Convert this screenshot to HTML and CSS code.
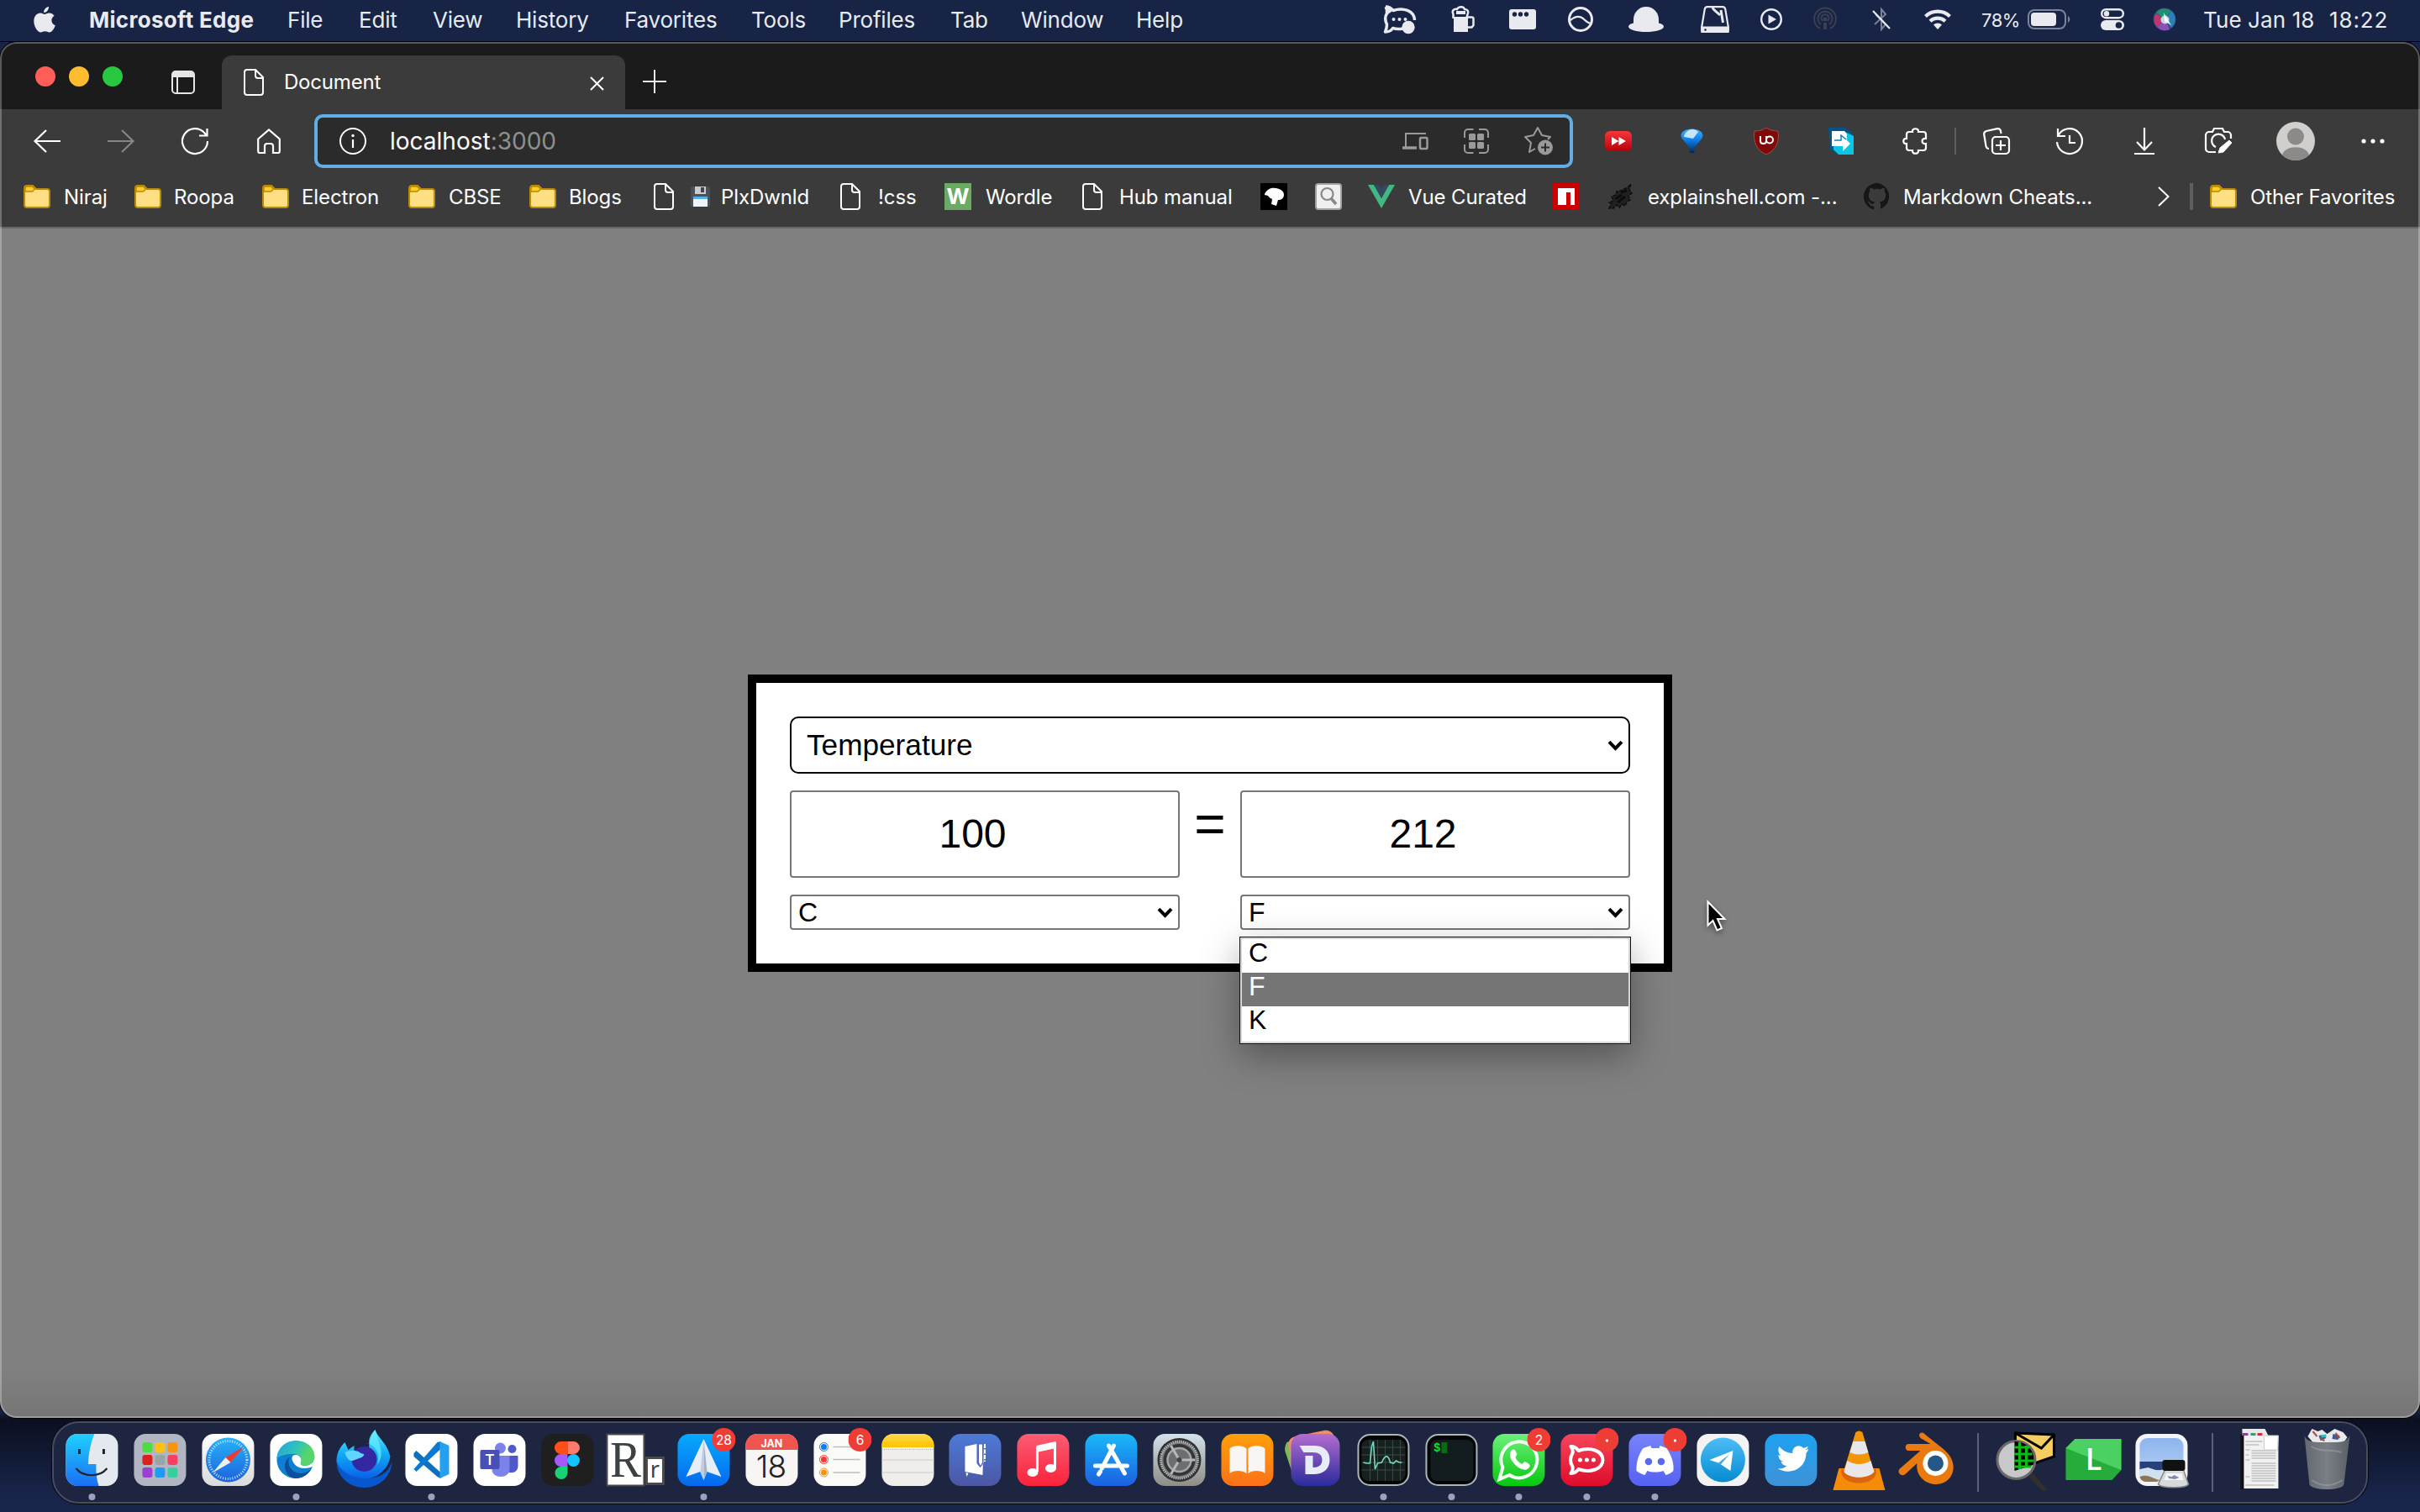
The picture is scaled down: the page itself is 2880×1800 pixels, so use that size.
FILE: index.html
```html
<!DOCTYPE html>
<html lang="en">
<head>
<meta charset="utf-8">
<title>Document</title>
<link rel="stylesheet" href="styles.css">
</head>
<body>
<svg class="defs" width="0" height="0">
  <defs>
    <symbol id="folder" viewBox="0 0 32 28"><path d="M1 4a3 3 0 0 1 3-3h7l4 4h13a3 3 0 0 1 3 3v16a3 3 0 0 1-3 3H4a3 3 0 0 1-3-3z" fill="#ffdf83" stroke="#b98a06" stroke-width="2"/><path d="M2 8V4a2 2 0 0 1 2-2h6.500l3 3-3 3z" fill="#ffcb30" stroke="#b98a06" stroke-width="1.500"/></symbol>
    <symbol id="page" viewBox="0 0 24 32"><path d="M4 1h10l9 9v18a3 3 0 0 1-3 3H4a3 3 0 0 1-3-3V4a3 3 0 0 1 3-3zM14 1v7a3 3 0 0 0 3 3h6" fill="none" stroke="#fff" stroke-width="2"/></symbol>
    <linearGradient id="gFinder" x2="0" y2="1"><stop stop-color="#1fd0fd"/><stop offset="1" stop-color="#1c6ff3"/></linearGradient>
    <linearGradient id="gWhite" x2="0" y2="1"><stop stop-color="#fff"/><stop offset="1" stop-color="#dadada"/></linearGradient>
    <linearGradient id="gSafari" x2="0" y2="1"><stop stop-color="#26b2f8"/><stop offset="1" stop-color="#1d62dd"/></linearGradient>
    <linearGradient id="gSpark" x2="0" y2="1"><stop stop-color="#05aafd"/><stop offset="1" stop-color="#0569ef"/></linearGradient>
    <linearGradient id="gEdge" x2="1" y2=".4"><stop stop-color="#2a9fe0"/><stop offset=".5" stop-color="#2cc1c0"/><stop offset="1" stop-color="#62da55"/></linearGradient>
    <linearGradient id="gFox" x2="0" y2="1"><stop stop-color="#5ff0ff"/><stop offset=".5" stop-color="#10a9f5"/><stop offset="1" stop-color="#0a5ee6"/></linearGradient>
    <linearGradient id="gNotes" x2="0" y2="1"><stop stop-color="#ffd84a"/><stop offset="1" stop-color="#ffc400"/></linearGradient>
    <linearGradient id="gBlue" x2="0" y2="1"><stop stop-color="#4d7bd8"/><stop offset="1" stop-color="#4b57a3"/></linearGradient>
    <linearGradient id="gMusic" x2="0" y2="1"><stop stop-color="#fb5c74"/><stop offset="1" stop-color="#fa233b"/></linearGradient>
    <linearGradient id="gStore" x2="0" y2="1"><stop stop-color="#19b9f8"/><stop offset="1" stop-color="#1c5fe0"/></linearGradient>
    <linearGradient id="gPrefs" x2="0" y2="1"><stop stop-color="#d3e2ea"/><stop offset="1" stop-color="#8f8c88"/></linearGradient>
    <linearGradient id="gBooks" x2="0" y2="1"><stop stop-color="#ff9f0a"/><stop offset="1" stop-color="#fb7118"/></linearGradient>
    <linearGradient id="gDash" x2="0" y2="1"><stop stop-color="#b36dd0"/><stop offset="1" stop-color="#2a2b9c"/></linearGradient>
    <linearGradient id="gWhats" x2="0" y2="1"><stop stop-color="#6cf07a"/><stop offset="1" stop-color="#06c80f"/></linearGradient>
    <linearGradient id="gRocket" x2="0" y2="1"><stop stop-color="#f8455c"/><stop offset="1" stop-color="#dc0d2b"/></linearGradient>
    <linearGradient id="gDiscord" x2="0" y2="1"><stop stop-color="#7683fb"/><stop offset="1" stop-color="#5662f3"/></linearGradient>
    <linearGradient id="gTele" x2="0" y2="1"><stop stop-color="#4cbdf6"/><stop offset="1" stop-color="#078bd0"/></linearGradient>
    <linearGradient id="gTwit" x2="0" y2="1"><stop stop-color="#1da1f2"/><stop offset="1" stop-color="#3e92d6"/></linearGradient>
    <linearGradient id="gTrash"><stop stop-color="#666c70"/><stop offset=".5" stop-color="#7d8388"/><stop offset="1" stop-color="#5c6266"/></linearGradient>
    <linearGradient id="gSky" x2="0" y2="1"><stop stop-color="#8db4ee"/><stop offset="1" stop-color="#b9d4f4"/></linearGradient>
    <linearGradient id="gFast" x2="0" y2="1"><stop stop-color="#f8363c"/><stop offset="1" stop-color="#b80008"/></linearGradient>
    <linearGradient id="gBalloon" x2="0" y2="1"><stop stop-color="#3fb0ff"/><stop offset=".5" stop-color="#0c78e0"/><stop offset="1" stop-color="#03284d"/></linearGradient>
    <symbol id="badge" viewBox="0 0 28 28"><circle cx="14" cy="14" r="14" fill="#ee3d35"/></symbol>
    <symbol id="chevron" viewBox="0 0 19 13"><path d="M2 2.200l7.500 7.600L17 2.200" fill="none" stroke="#000" stroke-width="4"/></symbol>
  </defs>
</svg>

<header class="menubar">
  <svg width="26" height="31" viewBox="0 0 26 31" fill="#e8eaef"><path d="M18 0c.3 3.500-2.500 7-5.800 7C11.800 3.700 14.800.5 18 0zM13 9c1.300 0 3-1.600 5.600-1.600 2.300 0 4.600 1.200 6 3.300-4.800 2.900-4 9.400 1.200 11.500C24.500 26 21.800 30.500 18.700 30.500c-2 0-2.700-1.200-5.100-1.200s-3.200 1.200-5.100 1.200C4.700 30.500.3 23.500.3 17.200.3 11 4.100 7.500 7.900 7.500 10.300 7.500 12 9 13 9z"/></svg>
  <b class="app">Microsoft Edge</b><span>File</span><span>Edit</span><span>View</span><span>History</span><span>Favorites</span><span>Tools</span><span>Profiles</span><span>Tab</span><span>Window</span><span>Help</span>
  <svg width="39" height="34" viewBox="0 0 39 34"><path d="M2 2c4 0 7 2 9 4.500 12-4 25 0 25.500 11.500M2 2c2 3 2 5 1.500 8-2.500 4-2.500 8 0 13 0 4-.5 6-2 9 4 0 7-1 9-4.500 4 1.300 8 1.300 12 .5" fill="none" stroke="#e8eaef" stroke-width="3.500" stroke-linejoin="round"/><path d="M2 2c4 0 7 2 9 4.500l-7 5C4 8 4 5 2 2z" fill="#e8eaef"/><g fill="#e8eaef"><circle cx="11.500" cy="17" r="2"/><circle cx="18.500" cy="17" r="2"/><circle cx="25.500" cy="17" r="2"/><circle cx="29" cy="26.500" r="7.700"/></g></svg>
  <svg width="27" height="30" viewBox="0 0 27 30" fill="#e8eaef"><path d="M2 12h17v18H2z"/><path d="M1.500 14V9C-.5 5 2 2 6 3c2-4 8-3.500 9 0 4 0 5 3 3.500 6l-1 4" fill="none" stroke="#e8eaef" stroke-width="2.500"/><path d="M5 5h11v4H5z"/><path d="M19 12.500h4.500a2 2 0 0 1 2 2V22l-2 2.500H19" fill="none" stroke="#e8eaef" stroke-width="2.500"/></svg>
  <svg width="32" height="24" viewBox="0 0 32 24"><rect width="32" height="24" rx="3" fill="#e8eaef"/><g fill="#172445"><circle cx="6.500" cy="6" r="2.700"/><circle cx="13.500" cy="6" r="2.700"/><circle cx="20.500" cy="6" r="2.700"/></g></svg>
  <svg width="30" height="30" viewBox="0 0 30 30" fill="none" stroke="#e8eaef" stroke-width="3"><circle cx="15" cy="15" r="13.500"/><path d="M3 16c6-5 11-5 15-2 3 3 5 5 9 6" stroke-width="2.300"/></svg>
  <svg width="42" height="30" viewBox="0 0 42 30" fill="#e8eaef"><path d="M6 19.500V15a15 15 0 0 1 30 0v4.500c4 1 6 2.500 6 4 0 4-10 6.500-21 6.500S0 27.500 0 23.500c0-1.500 2-3 6-4z"/></svg>
  <svg width="34" height="32" viewBox="0 0 34 32" fill="none" stroke="#e8eaef" stroke-width="2.200"><path d="M8 1.200h18c2 0 3 1 3.300 3L32.800 25v4c0 1-1 2-2 2H3.200c-1 0-2-1-2-2v-4L4.700 4.200c.3-2 1.300-3 3.300-3z"/><path d="M1.500 25.500h31V31h-31z" fill="#e8eaef"/><path d="M14 2c1 3 4 4 9 9M24 5l2.500 15" stroke-width="3"/><circle cx="5.500" cy="28.500" r="1.300" fill="#172445" stroke="none"/></svg>
  <svg width="26" height="26" viewBox="0 0 26 26"><circle cx="13" cy="13" r="11.800" fill="none" stroke="#e8eaef" stroke-width="2.400"/><path d="M9.500 7.500v11L19 13z" fill="#e8eaef"/></svg>
  <svg width="28" height="28" viewBox="0 0 28 28" fill="none" stroke="#3c3f50" stroke-width="2"><path d="M8 25a13 13 0 1 1 12 0"/><path d="M9 20a8.500 8.500 0 1 1 10 0"/><path d="M11 16a4.500 4.500 0 1 1 6 0"/><circle cx="14" cy="14" r="1.500" fill="#3c3f50"/><path d="M14 18v8" stroke-width="4"/></svg>
  <svg width="22" height="28" viewBox="0 0 22 28" fill="none" stroke-width="2"><path d="M3 20L16 8l-5-6v24l5-6L4 8" stroke="#7b839a"/><path d="M1 4l20 21" stroke="#e8eaef" stroke-width="2.200"/></svg>
  <svg width="32" height="24" viewBox="0 0 32 24" fill="none" stroke="#e8eaef" stroke-width="4.200"><path d="M1.500 8.500a21 21 0 0 1 29 0M7 14.200a13 13 0 0 1 18 0"/><path d="M16 24l-5-5.500a7.500 7.500 0 0 1 10 0z" fill="#e8eaef" stroke="none"/></svg>
  <span class="pct">78%</span>
  <svg width="52" height="24" viewBox="0 0 52 24"><rect x="1" y="1" width="44" height="22" rx="7" fill="none" stroke="#7b839a" stroke-width="2"/><rect x="4" y="4" width="30" height="16" rx="4" fill="#e8eaef"/><path d="M48 8c3 1.500 3 6.500 0 8z" fill="#7b839a"/></svg>
  <svg width="28" height="26" viewBox="0 0 28 26"><rect x="1.200" y="1.200" width="25.600" height="10" rx="5" fill="none" stroke="#e8eaef" stroke-width="2.400"/><circle cx="7" cy="6.200" r="3.200" fill="#e8eaef"/><rect y="14" width="28" height="12" rx="6" fill="#e8eaef"/><circle cx="21.500" cy="20" r="3.800" fill="#172445"/></svg>
  <svg width="28" height="28" viewBox="0 0 28 28"><circle cx="14" cy="14" r="13.500" fill="#3a4a78"/><path d="M4 6a13 13 0 0 1 18-2l-8 10z" fill="#1f8f73"/><path d="M3.500 7A13 13 0 0 0 5 23l9-9z" fill="#c2356b"/><path d="M5 23a13 13 0 0 0 15 3l-5-12z" fill="#8a4fb8"/><path d="M22 4a13 13 0 0 1 0 20l-7-9z" fill="#2c7fb8"/><circle cx="14.500" cy="14.500" r="5" fill="#cfeef5" opacity=".85"/><path d="M13 6l4 7 5 8-8-5z" fill="#fff" opacity=".9"/></svg>
  <span class="date">Tue Jan 18</span><span class="time">18:22</span>
</header>

<main class="window">
  <div class="tabstrip">
    <div class="lights"><i class="red"></i><i class="yellow"></i><i class="green"></i></div>
    <svg class="workspaces" width="28" height="28" viewBox="0 0 28 28"><rect x="1" y="1" width="26" height="26" rx="4" fill="none" stroke="#e6e6e6" stroke-width="2"/><path d="M1 8V5a4 4 0 0 1 4-4h18a4 4 0 0 1 4 4v3z" fill="#e6e6e6"/><path d="M7 8v19" stroke="#e6e6e6" stroke-width="2"/></svg>
    <div class="tab">
      <svg width="24" height="32"><use href="#page"/></svg>
      <span>Document</span>
      <svg class="close" width="17" height="17" viewBox="0 0 17 17" stroke="#fff" stroke-width="2"><path d="M1 1l15 15M16 1L1 16"/></svg>
    </div>
    <svg class="newtab" width="28" height="28" viewBox="0 0 28 28" stroke="#e8e8e8" stroke-width="2"><path d="M14 0v28M0 14h28"/></svg>
  </div>

  <div class="navbar">
    <svg width="32" height="28" viewBox="0 0 32 28" fill="none" stroke="#fff" stroke-width="2.200"><path d="M32 14H1M15 1L1.500 14 15 27"/></svg>
    <svg width="32" height="28" viewBox="0 0 32 28" fill="none" stroke="#868686" stroke-width="2.200"><path d="M0 14h31M17 1l13.500 13L17 27"/></svg>
    <svg width="32" height="32" viewBox="0 0 32 32" fill="none" stroke="#fff" stroke-width="2.200"><path d="M31 16A15 15 0 1 1 27.500 6.400L30 9.500M30.500 1v8.500H21"/></svg>
    <svg width="28" height="30" viewBox="0 0 28 30" fill="none" stroke="#fff" stroke-width="2.200"><path d="M1.200 12.500L14 1.400l12.800 11.100V27a2 2 0 0 1-2 2H19v-8a3 3 0 0 0-3-3h-4a3 3 0 0 0-3 3v8H3.200a2 2 0 0 1-2-2z"/></svg>
    <div class="omnibox">
      <svg width="32" height="32" viewBox="0 0 32 32"><circle cx="16" cy="16" r="15" fill="none" stroke="#fff" stroke-width="2"/><path d="M16 14v10" stroke="#fff" stroke-width="2.200"/><circle cx="16" cy="9.500" r="1.700" fill="#fff"/></svg>
      <span class="url">localhost<em>:3000</em></span>
      <svg width="31" height="20" viewBox="0 0 31 20" fill="none" stroke="#9a9a9a" stroke-width="2"><path d="M28 1H4v16"/><path d="M0 18h17" stroke-width="3.500"/><rect x="21" y="6" width="8.500" height="13" rx="1" stroke-width="2.500"/></svg>
      <svg width="30" height="30" viewBox="0 0 30 30"><path d="M1 11V5a4 4 0 0 1 4-4h6.500M18 1h7a4 4 0 0 1 4 4v6M29 19v6a4 4 0 0 1-4 4h-7M11.500 29H5a4 4 0 0 1-4-4v-6" fill="none" stroke="#9a9a9a" stroke-width="2"/><g fill="#9a9a9a"><rect x="6" y="6" width="8" height="8" rx="1.500"/><rect x="16" y="6" width="8" height="8" rx="1.500"/><rect x="6" y="16" width="8" height="8" rx="1.500"/><rect x="16" y="16" width="8" height="8" rx="1.500"/></g></svg>
      <svg width="34" height="34" viewBox="0 0 34 34"><path d="M13 26l-7 4 2-11-7-7 10-2 5-9 5 9 10 2-3 3" fill="none" stroke="#9a9a9a" stroke-width="2" stroke-linejoin="round"/><circle cx="25" cy="24.500" r="9" fill="#9a9a9a"/><path d="M25 19.500v10M20 24.500h10" stroke="#2b2b2b" stroke-width="2"/></svg>
    </div>
    <svg width="32" height="24" viewBox="0 0 32 24"><rect width="32" height="24" rx="6" fill="url(#gFast)"/><path d="M8 7l8.500 5L8 17zM16.500 7l8.500 5-8.500 5z" fill="#fff"/></svg>
    <svg width="27" height="30" viewBox="0 0 27 30"><path d="M13.500.5C21 .5 27 4 26.500 9c-.5 4-7 9-10 14v6h-6v-6C8 18 1 13 .5 9 0 4 6 .5 13.500.5z" fill="url(#gBalloon)"/><path d="M10 2c4-2 8-1 11 2l-6 8-11-2C4 7 6 4 10 2z" fill="#e2f2ff" opacity=".85"/></svg>
    <svg width="30" height="32" viewBox="0 0 30 32"><path d="M15 0c4 3 9 4 14 4 2 14-3 23-14 28C4 27-1 18 1 4c5 0 10-1 14-4z" fill="#800a0a" stroke="#a24a4a" stroke-width="1"/><path d="M8 10v5.500q0 3.500 3.500 3.500t3.500-3.500V10M15 14.500a4 4 0 1 1 8 0 4 4 0 1 1-8 0" fill="none" stroke="#fff" stroke-width="2"/></svg>
    <svg width="30" height="32" viewBox="0 0 30 32"><path d="M0 0h20l10 8v24H12L2 26z" fill="#00558a"/><path d="M4 4h15l7 7v7H4z" fill="#fff"/><path d="M6 22h24v10H12l-6-6z" fill="#0cc5e5"/><path d="M22 6l8 4v22h-9z" fill="#0cc5e5"/><path d="M4 16h13v-6l9 9-9 9v-6H4z" fill="#fff"/><path d="M7 15h8V9l6 5" fill="none" stroke="#1a7fae" stroke-width="1.500"/></svg>
    <svg width="30" height="32" viewBox="0 0 30 32" fill="none" stroke="#fff" stroke-width="2.200"><path d="M8 5h4c-1-5 8-5 7 0h6a3 3 0 0 1 3 3v5c-6-1-6 7 0 6v5a3 3 0 0 1-3 3h-6c1 5-8 5-7 0H8a3 3 0 0 1-3-3v-5c-5 1-5-7 0-6V8a3 3 0 0 1 3-3z"/></svg>
    <i class="rule"></i>
    <svg width="32" height="32" viewBox="0 0 32 32" fill="none" stroke="#fff" stroke-width="2.200"><rect x="11" y="11" width="20" height="20" rx="4"/><path d="M21 15v12M15 21h12M7 25c-2 0-3-1-3.500-3L1.200 8C1 6 2 4.500 4 4l13-2.800c2-.3 3.500.8 4 2.800l.5 3"/></svg>
    <svg width="32" height="32" viewBox="0 0 32 32" fill="none" stroke="#fff" stroke-width="2.200"><path d="M2 1v9h9M2.500 9.500A15 15 0 1 1 1 17M16 9v9h7"/></svg>
    <svg width="24" height="32" viewBox="0 0 24 32" fill="none" stroke="#fff" stroke-width="2.200"><path d="M12 0v26M3 17l9 9.500 9-9.500M0 31h24"/></svg>
    <svg width="32" height="32" viewBox="0 0 32 32" fill="none" stroke="#fff" stroke-width="2.200"><path d="M13 29H5a4 4 0 0 1-4-4V9a4 4 0 0 1 4-4h4l2-4h10l2 4h4a4 4 0 0 1 4 4v4M13 23a8 8 0 1 1 11-9"/><path d="M16 30l2-6 11-9 3 3-10 11z" fill="#fff" stroke-width="1"/></svg>
    <svg width="46" height="46" viewBox="0 0 46 46"><circle cx="23" cy="23" r="23" fill="#d0cfcd"/><circle cx="23" cy="17.500" r="10" fill="#8b8a88"/><path d="M7 39.500C10 27 36 27 39 39.500a23 23 0 0 1-32 0z" fill="#8b8a88"/></svg>
    <svg width="28" height="6" viewBox="0 0 28 6" fill="#fff"><circle cx="3" cy="3" r="2.600"/><circle cx="14" cy="3" r="2.600"/><circle cx="25" cy="3" r="2.600"/></svg>
  </div>

  <nav class="bookmarks">
    <svg width="32" height="28"><use href="#folder"/></svg><span>Niraj</span>
    <svg width="32" height="28"><use href="#folder"/></svg><span>Roopa</span>
    <svg width="32" height="28"><use href="#folder"/></svg><span>Electron</span>
    <svg width="32" height="28"><use href="#folder"/></svg><span>CBSE</span>
    <svg width="32" height="28"><use href="#folder"/></svg><span>Blogs</span>
    <svg width="24" height="32"><use href="#page"/></svg>
    <svg width="23" height="24" viewBox="0 0 23 24"><rect width="23" height="24" rx="2" fill="#4c4f55"/><path d="M5 0h13v9H5z" fill="#c9ccd0"/><path d="M12 1h4v6h-4z" fill="#444"/><path d="M3 12h17v12H3z" fill="#eef4fa"/><path d="M3 12h17v3H3z" fill="#58aee8"/></svg>
    <span>PlxDwnld</span>
    <svg width="24" height="32"><use href="#page"/></svg><span>!css</span>
    <b class="wordle">W</b><span>Wordle</span>
    <svg width="24" height="32"><use href="#page"/></svg><span>Hub manual</span>
    <svg width="32" height="32" viewBox="0 0 32 32"><path d="M0 0h32v32H0z"/><path d="M5 14c0-3 4-7 8-8 7-1 15 2 15 8 0 4-3 6-7 6l-2 7-6-2 1-6c-2-1-4-2-5-4z" fill="#fff"/></svg>
    <svg width="32" height="32" viewBox="0 0 32 32"><rect x="1" y="1" width="30" height="30" rx="3" fill="#efefef" stroke="#a2a2a2" stroke-width="2"/><circle cx="14.500" cy="13" r="7" fill="none" stroke="#888" stroke-width="2.200"/><path d="M19 18l6 7" stroke="#888" stroke-width="3.500"/></svg>
    <svg width="32" height="28" viewBox="0 0 32 28"><path d="M0 0h7l9 16 9-16h7L16 28z" fill="#41b883"/><path d="M7 0h6l3 5 3-5h6l-9 16z" fill="#35495e"/></svg>
    <span>Vue Curated</span>
    <svg width="32" height="32" viewBox="0 0 32 32"><path d="M0 0h32v32H0z" fill="#cb0000"/><path d="M6 6h20v20h-5V11h-5v15H6z" fill="#fff"/></svg>
    <svg width="30" height="30" viewBox="0 0 30 30" fill="#0d0d0d" stroke="#0d0d0d" stroke-width="1.500"><path d="M1 29l3-5-3-2 5-2-2-5 5-2 1-4 5-1 4-2 4-2 4-4-2 7 3 4-4 3 2 5-4 2-2 5-4-2-3 4-3-3-4 4z" fill-opacity=".55" stroke-dasharray="4 1.500"/><path d="M8 18l8-5M11 22l9-7M15 10l7-2" stroke-width="3"/></svg>
    <span>explainshell.com -...</span>
    <svg width="32" height="32" viewBox="0 0 16 16" fill="#171515"><path d="M8 0a8 8 0 0 0-2.500 15.600c.4.100.5-.2.500-.4v-1.500c-2 .5-2.500-.9-2.700-1.400-.1-.2-.5-.9-.8-1.100-.3-.1-.7-.5 0-.5.600 0 1.100.6 1.200.8.700 1.200 1.900.9 2.300.7.100-.5.300-.9.500-1.100-1.800-.2-3.600-.9-3.600-4 0-.8.300-1.500.8-2.100-.1-.3-.4-1.100.1-2.100 0 0 .7-.2 2.200.8a7.500 7.500 0 0 1 4 0c1.500-1 2.200-.8 2.200-.8.400 1 .1 1.800.1 2.100.5.600.8 1.300.8 2.100 0 3.100-1.900 3.800-3.700 4 .3.300.6.800.6 1.500v2.200c0 .2.100.5.500.4A8 8 0 0 0 8 0z"/></svg>
    <span>Markdown Cheats...</span>
    <svg width="14" height="24" viewBox="0 0 14 24" fill="none" stroke="#fff" stroke-width="2"><path d="M1 1l11.500 11L1 23"/></svg>
    <i class="rule"></i>
    <svg width="32" height="28"><use href="#folder"/></svg><span>Other Favorites</span>
  </nav>

  <section class="page">
    <div class="card">
      <div class="select wide"><span>Temperature</span><svg width="19" height="13"><use href="#chevron"/></svg></div>
      <div class="columns">
        <div class="unit">
          <div class="number">100</div>
          <div class="select"><span>C</span><svg width="19" height="13"><use href="#chevron"/></svg></div>
        </div>
        <div class="equals">=</div>
        <div class="unit">
          <div class="number">212</div>
          <div class="select"><span>F</span><svg width="19" height="13"><use href="#chevron"/></svg></div>
          <ul class="options"><li>C</li><li class="active">F</li><li>K</li></ul>
        </div>
      </div>
    </div>
  </section>
</main>

<svg class="cursor" width="26" height="38" viewBox="0 0 26 38"><path d="M1.500 1.500v28l6-5.500 5 11.500 5.500-2.500-5-11h8.500z" fill="#000" stroke="#fff" stroke-width="2"/></svg>

<footer class="dock">
  <svg class="ic" viewBox="0 0 80 98"><rect x="9" y="15" width="62" height="62" rx="14" fill="#e4e8ef"/><path d="M23 15h20c-5 12-7 24-7.500 36H45c-.5 9 .5 18 3 26H23A14 14 0 0 1 9 63V29a14 14 0 0 1 14-14z" fill="url(#gFinder)"/><path d="M25 33v6M54 33v6" stroke="#222" stroke-width="3"/><path d="M21 56c9 11 28 11 37 0" fill="none" stroke="#222" stroke-width="2.200"/><circle class="dot" cx="40" cy="90" r="4"/></svg>
  <svg class="ic" viewBox="0 0 80 98"><rect x="9" y="15" width="62" height="62" rx="14" fill="#b2b6c2"/><g><rect x="19" y="25" width="12" height="12" rx="3" fill="#4fdc3e"/><rect x="34" y="25" width="12" height="12" rx="3" fill="#fcc111"/><rect x="49" y="25" width="12" height="12" rx="3" fill="#f9940d"/><rect x="19" y="40" width="12" height="12" rx="3" fill="#dc201c"/><rect x="34" y="40" width="12" height="12" rx="3" fill="#9ba4a6"/><rect x="49" y="40" width="12" height="12" rx="3" fill="#fb3f62"/><rect x="19" y="55" width="12" height="12" rx="3" fill="#9e3fd2"/><rect x="34" y="55" width="12" height="12" rx="3" fill="#1d9bf5"/><rect x="49" y="55" width="12" height="12" rx="3" fill="#37cf9f"/></g></svg>
  <svg class="ic" viewBox="0 0 80 98"><rect x="9" y="15" width="62" height="62" rx="14" fill="url(#gWhite)"/><circle cx="40" cy="46" r="26.500" fill="url(#gSafari)"/><circle cx="40" cy="46" r="22.500" fill="none" stroke="#cfe6fa" stroke-width="3" stroke-dasharray="1 1.900"/><path d="M59 30L43 49l-6-6z" fill="#ed3b34"/><path d="M22 61l15-18 6 6z" fill="#eef0f2"/></svg>
  <svg class="ic" viewBox="0 0 80 98"><rect x="9" y="15" width="62" height="62" rx="14" fill="#fff"/><circle cx="39" cy="46" r="22" fill="#0f7fd2"/><path d="M17 44C18 30 29 23 40 23c13 0 22 9 22 19 0 9-9 12-16 10-2-1-1-3 0-5 2-5-5-9-11-8-8 0-14 2-18 5z" fill="url(#gEdge)"/><path d="M33 42c-5 8 0 19 12 20 6 0 10-3 13-5-5 8-12 11-19 11-13-1-17-20-6-26z" fill="#0c4f9c"/><path d="M36 41c-2 3-1 7 4 12 5 4 14 4 22 0v-8c-3 8-12 9-16 7-2-2 1-3 0-7-1-5-7-6-10-4z" fill="#fff"/><path d="M46 42c2 5-3 8 1 10 7 2 14-1 15-9l-2-7z" fill="#57d46c"/><circle class="dot" cx="40" cy="90" r="4"/></svg>
  <svg class="ic" viewBox="0 0 80 98"><path d="M7 48c0-10 4-17 10-23l4 9 7-5v8c8-6 15-5 18-3-1-9 2-18 7-24 3 10 14 15 18 32a33 31 0 0 1-64 6z" fill="url(#gFox)"/><path d="M7 48a33 31 0 0 0 66 0c-5 16-18 20-33 20S12 60 7 48z" fill="#0758cf"/><circle cx="40" cy="45" r="15" fill="#3526a2"/><path d="M17 37c7-3 14-3 19 1 5 1 5 2 1 5l-11 4c-4 1-8-5-9-10z" fill="#5fd5ff"/><path d="M41 26c10 0 20 12 14 26 7-8 6-17 3-25L53 10c-6 6-8 11-7 17z" fill="#65edff" opacity=".7"/></svg>
  <svg class="ic" viewBox="0 0 80 98"><rect x="9" y="15" width="62" height="62" rx="14" fill="#fff"/><path d="M19 38l3-3 29 26v7L47 66 19 42z" fill="#0e6fba"/><path d="M19 57l28-32 4-1v9L22 60z" fill="#0a7ad0"/><path d="M50 24l11 5v34l-11 5z" fill="#24a0ef"/><circle class="dot" cx="40" cy="90" r="4"/></svg>
  <svg class="ic" viewBox="0 0 80 98"><rect x="9" y="15" width="62" height="62" rx="14" fill="#fff"/><circle cx="41" cy="32" r="6.500" fill="#7b83eb"/><circle cx="55" cy="33" r="5" fill="#5059c9"/><path d="M48 41h14v12c0 9-10 10-14 6z" fill="#5059c9"/><path d="M31 41h21v16c0 12-21 12-21 0z" fill="#7b83eb"/><rect x="17" y="34" width="23" height="23" rx="2" fill="#4850b5"/><text x="28.500" y="52" text-anchor="middle" font-family="Inter" font-weight="600" font-size="17" fill="#fff">T</text></svg>
  <svg class="ic" viewBox="0 0 80 98"><rect x="9" y="15" width="62" height="62" rx="14" fill="#1f1f1f"/><path d="M32 24h8v15h-8a7.500 7.500 0 0 1 0-15z" fill="#ff4f18"/><path d="M40 24h7a7.500 7.500 0 0 1 0 15h-7z" fill="#ff7b6b"/><path d="M32 39h8v15h-8a7.500 7.500 0 0 1 0-15z" fill="#a659ff"/><circle cx="47" cy="46.500" r="7.500" fill="#12c4ff"/><path d="M32 54h8v7.500a7.500 7.500 0 1 1-8-7.500z" fill="#16d273"/></svg>
  <svg class="ic" viewBox="0 0 80 98"><path d="M6 15.500h44v61H6z" fill="#fff" stroke="#4a4a4a" stroke-width="2"/><path d="M53 43.500h20v31H53z" fill="#fff" stroke="#4a4a4a" stroke-width="3"/><text x="28" y="66" text-anchor="middle" font-family="Liberation Serif" font-size="61" textLength="37" lengthAdjust="spacingAndGlyphs" fill="#3c4144">R</text><text x="63" y="67" text-anchor="middle" font-family="Noto Sans" font-size="27" fill="#3c4144">r</text></svg>
  <svg class="ic" viewBox="0 0 80 98"><rect x="9" y="15" width="62" height="62" rx="14" fill="url(#gSpark)"/><path d="M40 21l21 45-17-6-4 10-4-10-17 6z" fill="#e8eef8"/><path d="M40 21v49l4-10z" fill="#a3b2c9"/><path d="M40 21v49l-4-10z" fill="#c2cddd"/><use href="#badge" x="50" y="8" width="28" height="28"/><text x="64" y="27.500" class="bt">28</text><circle class="dot" cx="40" cy="90" r="4"/></svg>
  <svg class="ic" viewBox="0 0 80 98"><rect x="9" y="15" width="62" height="62" rx="14" fill="#f7f6f5"/><path d="M9 34v-5a14 14 0 0 1 14-14h34a14 14 0 0 1 14 14v5z" fill="#f0544e"/><text x="40" y="30.500" text-anchor="middle" font-family="Inter" font-weight="700" font-size="12.500" fill="#fff">JAN</text><text x="39" y="67" text-anchor="middle" font-family="Inter" font-weight="300" font-size="37" letter-spacing="-1" fill="#222">18</text></svg>
  <svg class="ic" viewBox="0 0 80 98"><rect x="9" y="15" width="62" height="62" rx="14" fill="#fafaf9"/><g stroke="#bdbdbd" stroke-width="1.500"><path d="M32 30.500h32M32 45.500h32M32 61h32"/></g><g fill="none" stroke-width="1"><circle cx="21" cy="30.500" r="5" stroke="#0a7aff"/><circle cx="21" cy="45.500" r="5" stroke="#f8392f"/><circle cx="21" cy="61" r="5" stroke="#fb9408"/></g><circle cx="21" cy="30.500" r="3.500" fill="#0a7aff"/><circle cx="21" cy="45.500" r="3.500" fill="#f8392f"/><circle cx="21" cy="61" r="3.500" fill="#fb9408"/><use href="#badge" x="50" y="8" width="28" height="28"/><text x="64" y="27.500" class="bt">6</text></svg>
  <svg class="ic" viewBox="0 0 80 98"><rect x="9" y="15" width="62" height="62" rx="14" fill="#efeeea"/><path d="M9 31v-2a14 14 0 0 1 14-14h34a14 14 0 0 1 14 14v2z" fill="url(#gNotes)"/><path d="M9 33.500h62" stroke="#aaa" stroke-dasharray="1 1.500"/><path d="M9 46h62M9 61h62" stroke="#cbcac6" stroke-width="1"/></svg>
  <svg class="ic" viewBox="0 0 80 98"><rect x="9" y="15" width="62" height="62" rx="14" fill="url(#gBlue)"/><path d="M28 30l14-3v23l4 5 4-5V28l-1 36-21-4z" fill="#fff"/><path d="M44 27h5v22l-2.500 5-2.500-5z" fill="#fff" stroke="#4d62b8" stroke-width="1"/><path d="M51.500 27v21" stroke="#fff" stroke-width="2" stroke-dasharray="5 1.500"/><path d="M29 61l3 1-2 4z" fill="#fff"/></svg>
  <svg class="ic" viewBox="0 0 80 98"><rect x="9" y="15" width="62" height="62" rx="14" fill="url(#gMusic)"/><path d="M33 60V32l21-5v29" fill="none" stroke="#fff" stroke-width="3"/><path d="M32 29l23-5v8l-23 5z" fill="#fff"/><ellipse cx="27.500" cy="61" rx="6.500" ry="5" fill="#fff"/><ellipse cx="49" cy="56" rx="6.500" ry="5" fill="#fff"/></svg>
  <svg class="ic" viewBox="0 0 80 98"><rect x="9" y="15" width="62" height="62" rx="14" fill="url(#gStore)"/><path d="M43 29L29 56M37 29l19 33M21 53h38M27 60l-2 3" fill="none" stroke="#fff" stroke-width="5" stroke-linecap="round"/></svg>
  <svg class="ic" viewBox="0 0 80 98"><rect x="9" y="15" width="62" height="62" rx="14" fill="url(#gPrefs)"/><circle cx="40" cy="46" r="26" fill="#303132"/><circle cx="40" cy="46" r="22" fill="#77797a" stroke="#b3b5b6" stroke-width="3" stroke-dasharray="1.500 1"/><circle cx="40" cy="46" r="19" fill="#343536"/><circle cx="40" cy="46" r="14" fill="#6d6e6f" stroke="#a5a7a8" stroke-width="2.500"/><path d="M40 46h19M40 46l-10-17M40 46L30 63" stroke="#b5b7b8" stroke-width="3"/><circle cx="40" cy="46" r="3" fill="#444"/></svg>
  <svg class="ic" viewBox="0 0 80 98"><rect x="9" y="15" width="62" height="62" rx="14" fill="url(#gBooks)"/><path d="M19 33c3-5 17-5 20 0v29c-4-4-16-4-20 0zM41 33c3-5 17-5 20 0v29c-4-4-16-4-20 0z" fill="#f8f5f2"/></svg>
  <svg class="ic" viewBox="0 0 80 98"><path d="M6 25l20-6v50l-12-3L4 36c-1-4 0-7 2-11z" fill="#7fb856"/><path d="M8 26c1-5 4-7 8-8l34-7c6-1 10 2 12 6v20L12 60z" fill="#ef8c6e"/><rect x="11" y="15" width="58" height="62" rx="14" fill="url(#gDash)"/><path d="M21 29h17c12 0 19 6 19 17s-8 17-19 17H28V41h9v14c7 0 11-3 11-9s-4-9-11-9H26z" fill="#e6edf8"/></svg>
  <svg class="ic" viewBox="0 0 80 98"><rect x="10" y="16" width="60" height="60" rx="14" fill="#040606" stroke="#aab6ba" stroke-width="2"/><rect x="14" y="22" width="52" height="49" rx="8" fill="#16211f"/><path d="M14 31h52M14 40h52M14 49h52M14 58h52M24 22v49M33 22v49M42 22v49M51 22v49M60 22v49" stroke="#3a4a48" stroke-width="1"/><path d="M16 49l4 1h4l2-20 2-6 2 33 3-7 5-1c4-10 8-9 10 0l4 1 3-3 4 2h3" fill="none" stroke="#77d6c1" stroke-width="1.600"/><circle class="dot" cx="40" cy="90" r="4"/></svg>
  <svg class="ic" viewBox="0 0 80 98"><rect x="10" y="16" width="60" height="60" rx="14" fill="#040606" stroke="#aab6ba" stroke-width="2"/><rect x="15" y="22" width="51" height="49" rx="8" fill="#131d1f"/><text x="18.500" y="36" font-family="Liberation Mono" font-weight="700" font-size="14" fill="#18dd22">$</text><path d="M28 25h7v13h-7z" fill="#096b13"/><circle class="dot" cx="40" cy="90" r="4"/></svg>
  <svg class="ic" viewBox="0 0 80 98"><rect x="9" y="15" width="62" height="62" rx="14" fill="url(#gWhats)"/><path d="M17 69l4-14a21.500 21.500 0 1 1 8 9z" fill="none" stroke="#f4fff4" stroke-width="4"/><path d="M31 35c3-3 5-1 7 4l-2 4c2 4 4 6 8 8l3-3c5 2 7 4 6 6-3 6-10 4-16-1-5-5-10-12-6-18z" fill="#fff"/><use href="#badge" x="50" y="8" width="28" height="28"/><text x="64" y="27.500" class="bt">2</text><circle class="dot" cx="40" cy="90" r="4"/></svg>
  <svg class="ic" viewBox="0 0 80 98"><rect x="9" y="15" width="62" height="62" rx="14" fill="url(#gRocket)"/><path d="M21 30c4 0 7 2 9 5 14-5 29 0 29 11s-15 16-29 11c-2 3-5 5-9 5 2-3 3-5 2-8-3-5-3-11 0-16 1-3 0-5-2-8z" fill="none" stroke="#fff" stroke-width="4" stroke-linejoin="round"/><g fill="#fff"><circle cx="32" cy="46" r="2.500"/><circle cx="40" cy="46" r="2.500"/><circle cx="48" cy="46" r="2.500"/></g><use href="#badge" x="50" y="8" width="28" height="28"/><circle cx="64" cy="23" r="1.700" fill="#fff"/><circle class="dot" cx="40" cy="90" r="4"/></svg>
  <svg class="ic" viewBox="0 0 80 98"><rect x="9" y="15" width="62" height="62" rx="14" fill="url(#gDiscord)"/><path d="M26 32l9-3 1 3h9l1-3 8 3c6 9 9 18 8 27-3 3-6 4-9 5l-3-5c-6 2-13 2-19 0l-3 5c-3-1-6-2-10-5 0-11 2-18 8-27z" fill="#fff"/><circle cx="32.500" cy="48" r="4.300" fill="#5b68f2"/><circle cx="47.500" cy="48" r="4.300" fill="#5b68f2"/><use href="#badge" x="50" y="8" width="28" height="28"/><circle cx="64" cy="23" r="1.700" fill="#fff"/><circle class="dot" cx="40" cy="90" r="4"/></svg>
  <svg class="ic" viewBox="0 0 80 98"><rect x="9" y="15" width="62" height="62" rx="14" fill="#f3f3f3"/><circle cx="40" cy="46" r="26.500" fill="url(#gTele)"/><path d="M24 46l28-11-3 24-12-8-4-2z" fill="#fff"/><path d="M34 50l14-11-11 13z" fill="#49a9dc"/></svg>
  <svg class="ic" viewBox="0 0 80 98"><rect x="9" y="15" width="62" height="62" rx="14" fill="url(#gTwit)"/><path d="M61 33c-2 1-3 1-4 1 2-1 3-2 3-4-2 1-3 1-5 2-6-6-14-1-13 6-6 0-12-3-16-8-2 4-1 8 2 11l-3-1c0 4 2 7 6 8h-3c1 3 4 5 7 5-3 3-7 4-11 3 14 9 34 1 34-18 1-1 2-3 3-5z" fill="#fff"/></svg>
  <svg class="ic" viewBox="0 0 80 98"><path d="M16 56h48l7 26H9z" fill="#f58b06"/><path d="M19 57h41c5 22-45 22-41 0z" fill="#db6410"/><path d="M36 13q4-3 8 0l13 45c1 10-36 10-35 0z" fill="#f39509"/><path d="M33 24h14l4 13q-11 5-22 0zM26 47q14 8 28 0l4 13c-6 9-30 9-36 0z" fill="#e8e8ea"/></svg>
  <svg class="ic" viewBox="0 0 80 98"><path d="M31 17c3-3 5-1 7 1l20 16c23 17 13 43-7 43-14 0-25-11-23-25L14 65c-5 4-11-3-6-7l24-21H18c-5 0-5-8 0-8h26L32 22c-1-2-2-3-1-5z" transform="translate(0 -2)" fill="#ea7a10"/><circle cx="50" cy="50" r="15" fill="#fff"/><circle cx="50" cy="50" r="9.500" fill="#265787"/></svg>
  <i class="sep"></i>
  <svg class="ic" viewBox="0 0 80 98"><path d="M27 14l46 2v26L27 58z" fill="#f6cd60" stroke="#000" stroke-width="3"/><path d="M27 14l31 18 15-16" fill="none" stroke="#000" stroke-width="3"/><circle cx="28" cy="46" r="22.500" fill="#c8c8ca" stroke="#69696b" stroke-width="3"/><path d="M26 24c13 0 23 9 23 22 0 3 0 4-1 6l-22 7z" fill="#000"/><path d="M26 31h18M26 39h21M26 47h23M26 54h20M32 25v32M40 29v26" stroke="#08bf10" stroke-width="3"/><path d="M43 66l5-4 17 20-6 1z" fill="#30302f"/></svg>
  <svg class="ic" viewBox="0 0 80 98"><path d="M18 21h55v37L62 70H7V32z" fill="#25ac3a"/><path d="M18 21h55v37L7 32z" fill="#4bd062"/><text x="40" y="58" text-anchor="middle" font-family="Open Sans" font-weight="600" font-size="36" fill="#fff">L</text></svg>
  <svg class="ic" viewBox="0 0 80 98"><rect x="9" y="15" width="62" height="62" rx="14" fill="#f4f4f6"/><rect x="14" y="20" width="52" height="52" rx="9" fill="url(#gSky)"/><path d="M14 48h52v10H14z" fill="#26417c"/><path d="M14 57l10-2 12 4 10-3 20 4v6a6 6 0 0 1-6 6H23a9 9 0 0 1-9-9z" fill="#cfe1ef"/><path d="M14 66c10-4 14 2 24 4l-4 2H23c-5 0-8-2-9-6z" fill="#8b7657"/><path d="M44 58h22l6 17c-3 5-32 5-36 0z" fill="#d7dadd" stroke="#888" stroke-width="1.500"/><path d="M46 62h18l2 8H43z" fill="#f5f6f8"/><path d="M47 65l5 1 3-2 6 3-5 2-7-1z" fill="#7d8fae"/><rect x="41" y="46" width="27" height="13" rx="3" fill="#111"/></svg>
  <i class="sep narrow"></i>
  <svg class="ic" viewBox="0 0 80 98"><path d="M18 15h4v66h-4z" fill="#111"/><path d="M20 9h27l4 8H20z" fill="#e8e8e8"/><path d="M20 14h7v3h-7z" fill="#82449b"/><path d="M30 14h6v3h-6z" fill="#3c9b77"/><path d="M38 14h6v3h-6z" fill="#d02f45"/><path d="M22 17h41v63H22z" fill="#f1f1f1"/><path d="M24 24h20M24 28h16M31 35h29M31 38h29M31 41h29M31 44h29M31 50h29M31 53h29M31 56h29M31 59h29M31 62h29M31 65h29M31 68h29M31 71h29M24 34h5M24 40h4M24 46h5M24 66h5M24 76h34" stroke="#aaa" stroke-width="1.200"/><path d="M46 17h17L62 34H46z" fill="#fff" stroke="#ccc" stroke-width="1"/></svg>
  <svg class="ic" viewBox="0 0 80 98"><path d="M17 18l5-9 7 3 5-2 6 5 9-6 10 4 5 6-4 6H23z" fill="#e7e9ea"/><path d="M30 17l6-1 3 4-7 3zM47 15l8 2-2 5-7-1z" fill="#435a90"/><path d="M23 12l5 6M50 14l5 6M32 21l5 2" stroke="#b04a3a" stroke-width="2"/><path d="M33 18l6-1" stroke="#2bc0b8" stroke-width="3"/><path d="M13 17c3 9 14 8 27 8s24 1 27-8l-7 58c-1 8-39 8-41 0z" fill="url(#gTrash)" opacity=".96"/><path d="M21 30c13 8 24 2 36 7M22 70c10 8 25 8 36 0" fill="none" stroke="#a1a8ac" stroke-width="2" opacity=".5"/></svg>
</footer>
</body>
</html>
```
FILE: styles.css
```css
* { box-sizing: border-box; }

body {
  margin: 0;
  width: 2880px;
  height: 1800px;
  overflow: hidden;
  display: flex;
  flex-direction: column;
  align-items: center;
  background: linear-gradient(#172445 0, #172445 1680px, #0b1020 1690px, #18244a 1780px, #192549 1800px);
  font-family: Inter, "Liberation Sans", sans-serif;
  color: #fff;
}

svg { display: block; flex: none; overflow: visible; }
.defs { position: absolute; }

.menubar {
  width: 2880px;
  height: 50px;
  padding: 0 0 3px 40px;
  display: grid;
  grid-template-columns: 66px 236px 85px 88px 99px 129px 151px 104px 133px 84px 137px 295px 81px 68px 70px 72px 86px 71px 63px 70px 62px 68px 55px 87px 62px 60px 150px 80px;
  align-items: center;
  justify-items: start;
  background: #172445;
  border-bottom: 1px solid #000;
  font-size: 26px;
  letter-spacing: -0.2px;
  white-space: nowrap;
  color: #e8eaef;
}
.menubar .app { letter-spacing: 0.3px; }
.menubar .pct { font-size: 22px; letter-spacing: -0.5px; padding-top: 2px; }
.menubar .date { letter-spacing: 0.1px; }
.menubar .time { letter-spacing: 0.9px; }

.window {
  position: relative;
  width: 2880px;
  height: 1638px;
  display: flex;
  flex-direction: column;
  border-radius: 20px;
  overflow: hidden;
  background: #3b3b3b;
  box-shadow: 0 0 0 1px #000;
}
.window::after {
  content: "";
  position: absolute;
  inset: 0;
  border: 2px solid rgba(255, 255, 255, .28);
  border-radius: 20px;
}

.tabstrip {
  height: 80px;
  padding: 2px 0 0 42px;
  display: flex;
  align-items: flex-end;
  background: #1b1b1b;
}
.lights { display: flex; gap: 16px; padding-bottom: 27px; }
.lights i { width: 24px; height: 24px; border-radius: 50%; }
.red { background: #ff5f57; }
.yellow { background: #febc2e; }
.green { background: #28c840; }
.workspaces { margin: 0 32px 18px 58px; }
.tab {
  width: 480px;
  height: 64px;
  padding: 0 25px 0 26px;
  display: flex;
  align-items: center;
  border-radius: 12px 12px 0 0;
  background: #3b3b3b;
  font-size: 24px;
  letter-spacing: -0.2px;
}
.tab span { margin: 0 0 1px 24px; }
.tab .close { margin: 3px 0 0 auto; }
.newtab { margin: 0 0 19px 21px; }

.navbar {
  height: 76px;
  padding-left: 40px;
  display: grid;
  grid-template-columns: 88px 88px 90px 68px 1536px 90px 87px 89px 88px 62px 34px 87px 93px 84px 85px 101px 28px;
  align-items: center;
  justify-items: start;
}
.omnibox {
  width: 1498px;
  height: 64px;
  padding: 0 20px 0 26px;
  display: flex;
  align-items: center;
  border: 4px solid #63ade5;
  border-radius: 10px;
  background: #2b2b2b;
}
.url { flex: 1; padding-left: 28px; font-size: 28px; }
.url em { font-style: normal; color: #8f8f8f; }
.omnibox svg + svg { margin-left: 42px; }
.rule { width: 2px; height: 32px; background: #5e5e5e; }

.bookmarks {
  height: 66px;
  padding: 0 0 8px 28px;
  display: grid;
  grid-template-columns: 47px 85px 46px 106px 46px 128px 47px 97px 46px 102px 44px 35px 143px 44px 80px 48px 116px 43px 169px 65px 63px 47px 173px 66px 46px 258px 46px 304px 38px 24px 47px 201px;
  align-items: center;
  justify-items: start;
  border-bottom: 2px solid #676767;
  font-size: 24px;
  letter-spacing: -0.1px;
  white-space: nowrap;
}
.bookmarks span { padding-left: 1px; }
.bookmarks .rule { width: 4px; }
.wordle {
  width: 32px;
  height: 32px;
  background: #6aaa64;
  font-size: 26px;
  line-height: 32px;
  text-align: center;
  letter-spacing: 0;
}

.page {
  flex: 1;
  padding-top: 531px;
  background: linear-gradient(#808080 0, #808080 1360px, #757575 1416px);
  font-family: "Liberation Sans", Arial, sans-serif;
  color: #000;
}
.card {
  width: 1100px;
  height: 354px;
  margin: 0 auto;
  padding: 40px;
  display: flex;
  flex-direction: column;
  gap: 20px;
  border: 10px solid #000;
  background: #fff;
}
.select {
  height: 42px;
  padding: 0 6px 0 8px;
  display: flex;
  align-items: center;
  justify-content: space-between;
  border: 2px solid #767676;
  border-radius: 4px;
  font-size: 32px;
  line-height: 38px;
}
.select.wide {
  height: 68px;
  padding-left: 18px;
  border-color: #000;
  border-radius: 10px;
  font-size: 35.2px;
}
.columns { display: grid; grid-template-columns: 464px 32px 464px; gap: 20px; }
.unit { position: relative; display: flex; flex-direction: column; gap: 20px; }
.number {
  height: 104px;
  border: 2px solid #767676;
  border-radius: 4px;
  font-size: 48px;
  line-height: 100px;
  text-align: center;
  text-indent: -29px;
}
.equals { display: flex; justify-content: center; height: 80px; font-size: 64px; line-height: 80px; }
.options {
  position: absolute;
  left: -1px;
  top: 174px;
  width: 466px;
  height: 128px;
  margin: 0;
  padding: 0;
  list-style: none;
  border: 1px solid #111;
  outline: 2px solid #d5d5d5;
  outline-offset: -3px;
  background: #fff;
  font-size: 32px;
  line-height: 33px;
  box-shadow: 0 14px 44px rgba(0, 0, 0, .34);
}
.options li { height: 40px; margin: 0 2px; padding-left: 8px; }
.options li:first-child { margin-top: 2px; }
.options .active { background: #757575; color: #fff; }

.cursor { position: absolute; left: 2031px; top: 1072px; filter: drop-shadow(0 3px 3px rgba(0, 0, 0, .4)); }

.dock {
  width: 2756px;
  height: 98px;
  margin-top: 4px;
  padding-left: 5px;
  display: flex;
  border: 2px solid #474c64;
  border-radius: 32px;
  background: #1e2541;
  box-shadow: 0 0 0 1px #05070d;
}
.ic { width: 80.89px; height: 98px; margin-top: -2px; }
.sep { flex: none; width: 2px; height: 70px; margin: 12px 16px 0 19px; background: #5b6079; }
.sep.narrow { margin: 12px 14px 0 19px; }
.dot { fill: #9ca1bf; }
.bt { font: 400 15.500px Inter, sans-serif; fill: #fff; text-anchor: middle; }
```
